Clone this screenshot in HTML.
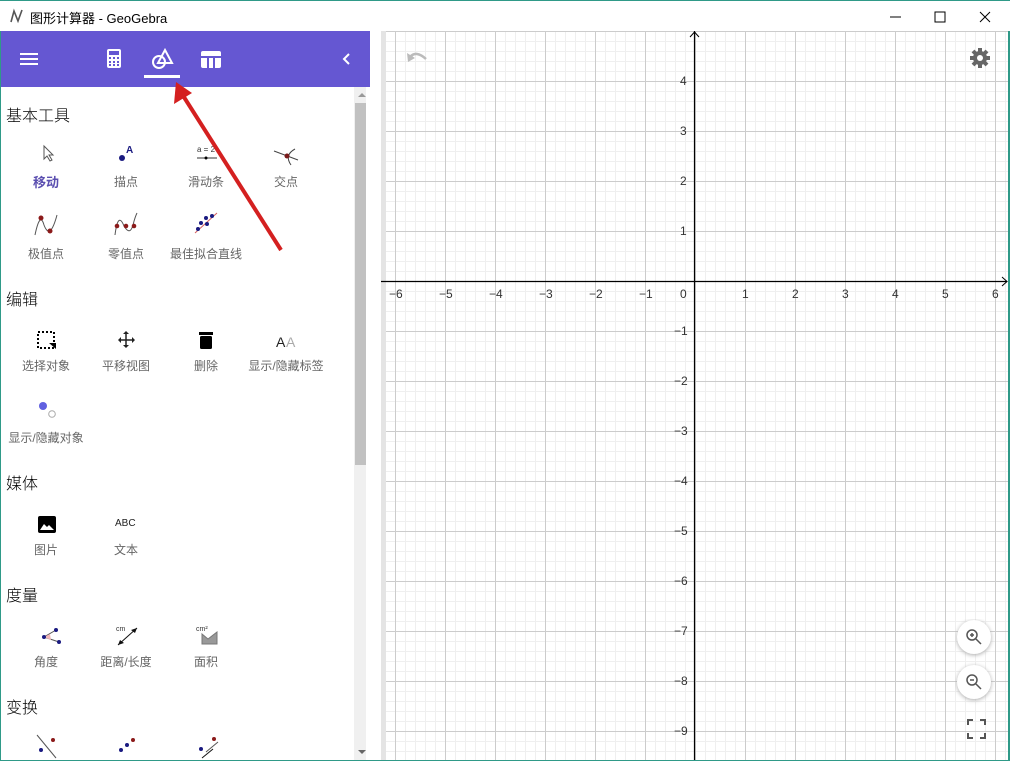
<!DOCTYPE html>
<html><head><meta charset="utf-8"><style>
*{margin:0;padding:0;box-sizing:border-box}
body{width:1010px;height:761px;overflow:hidden;background:#fff;font-family:"Liberation Sans","Noto Sans CJK SC",sans-serif;position:relative}
.title{position:absolute;left:0;top:0;width:1010px;height:31px;background:#fff;border-top:1px solid #2f9a88}
.title span{position:absolute;left:30px;top:7px;font-size:13px;color:#000}
.hdr{position:absolute;left:1px;top:31px;width:369px;height:56px;background:#6557d2}
.panel{position:absolute;left:1px;top:87px;width:354px;height:674px;background:#fff;overflow:hidden}
.sb{position:absolute;left:354px;top:87px;width:16px;height:674px;background:#f0f0f0}
.sec{position:absolute;left:5px;font-size:16px;color:#000;font-weight:normal;font-family:"Noto Sans CJK SC",sans-serif;font-weight:300}
.it{position:absolute;width:80px;text-align:center;font-size:12px;color:#666}
.ic{position:absolute;width:80px;height:26px;left:0}
.gr{position:absolute;left:370px;top:31px;width:638px;height:730px;overflow:hidden}
.lb{position:absolute;font-size:12px;color:#333}
</style></head><body>
<div class="title">
<svg style="position:absolute;left:9px;top:7px" width="16" height="16"><path d="M2 14 L5 3 L9 13 L13 2" fill="none" stroke="#555" stroke-width="1.6"/></svg>
<span>图形计算器 - GeoGebra</span>
<svg style="position:absolute;left:880px;top:8px" width="120" height="16"><path d="M10 8 H21" stroke="#000"/><rect x="55" y="3" width="10" height="10" fill="none" stroke="#000"/><path d="M100 3 L110 13 M110 3 L100 13" stroke="#000"/></svg>
</div>
<div style="position:absolute;left:0;top:31px;width:1px;height:730px;background:#2f9a88"></div>
<div class="hdr">
<svg width="369" height="56">
<path d="M19 23h18M19 28h18M19 33h18" stroke="#fff" stroke-width="2"/>
<rect x="106" y="18" width="14" height="19" rx="2" fill="#fff"/>
<rect x="108" y="20" width="10" height="4" fill="#6557d2"/>
<g fill="#6557d2"><rect x="108" y="26" width="2" height="2"/><rect x="112" y="26" width="2" height="2"/><rect x="116" y="26" width="2" height="2"/><rect x="108" y="30" width="2" height="2"/><rect x="112" y="30" width="2" height="2"/><rect x="116" y="30" width="2" height="2"/><rect x="108" y="33" width="2" height="2"/><rect x="112" y="33" width="2" height="2"/><rect x="116" y="33" width="2" height="2"/></g>
<circle cx="158" cy="31" r="6" fill="none" stroke="#fff" stroke-width="2"/>
<path d="M164 19 L171 32 L157 32 Z" fill="none" stroke="#fff" stroke-width="2"/>
<rect x="143" y="44" width="36" height="3" fill="#fff"/>
<rect x="200" y="20" width="20" height="17" rx="2" fill="#fff"/>
<path d="M200 26h20M207 26v11M213 26v11" stroke="#6557d2" stroke-width="2"/>
<path d="M348 23 L343 28 L348 33" fill="none" stroke="#fff" stroke-width="2"/>
</svg></div>
<div class="panel">
<div class="sec" style="top:15px">基本工具</div>
<div class="it" style="left:5px;top:60px"><svg class="ic" style="top:-4px"><path d="M38 3 L38 16 L41 13 L44 18 L46 17 L43 12 L47 12 Z" fill="#fff" stroke="#555"/></svg><div style="position:absolute;top:25px;width:80px;color:#5b4fb0;font-weight:bold;font-size:13px">移动</div></div>
<div class="it" style="left:85px;top:60px"><svg class="ic" style="top:-4px"><circle cx="36" cy="15" r="3" fill="#1a1a80"/><text x="40" y="10" font-size="10" fill="#1a1a80" font-family="Liberation Sans" font-weight="bold">A</text></svg><div style="position:absolute;top:26px;width:80px">描点</div></div>
<div class="it" style="left:165px;top:60px"><svg class="ic" style="top:-4px"><text x="31" y="9" font-size="8" fill="#333" font-family="Liberation Sans">a = 2</text><path d="M31 15h20" stroke="#333"/><circle cx="40" cy="15" r="1.5"/></svg><div style="position:absolute;top:26px;width:80px">滑动条</div></div>
<div class="it" style="left:245px;top:60px"><svg class="ic" style="top:-4px"><path d="M28 8 L52 17 M49 6 Q38 12 45 22" fill="none" stroke="#444"/><circle cx="41" cy="13" r="2.5" fill="#7a1a1a"/></svg><div style="position:absolute;top:26px;width:80px">交点</div></div>
<div class="it" style="left:5px;top:132px"><svg class="ic" style="top:-8px"><path d="M29 24 Q34 0 38 14 Q44 30 51 4" fill="none" stroke="#555"/><circle cx="35" cy="7" r="2.5" fill="#8b1a1a"/><circle cx="44" cy="20" r="2.5" fill="#8b1a1a"/></svg><div style="position:absolute;top:26px;width:80px">极值点</div></div>
<div class="it" style="left:85px;top:132px"><svg class="ic" style="top:-8px"><path d="M29 24 Q32 0 38 15 Q44 25 47 14 Q49 6 51 2" fill="none" stroke="#555"/><circle cx="31" cy="15" r="2.3" fill="#8b1a1a"/><circle cx="40" cy="15" r="2.3" fill="#8b1a1a"/><circle cx="48" cy="15" r="2.3" fill="#8b1a1a"/></svg><div style="position:absolute;top:26px;width:80px">零值点</div></div>
<div class="it" style="left:165px;top:132px"><svg class="ic" style="top:-8px"><path d="M29 22 L51 2" stroke="#d46060"/><g fill="#1a1a80"><circle cx="32" cy="18" r="2"/><circle cx="35" cy="12" r="2"/><circle cx="41" cy="13" r="2"/><circle cx="40" cy="7" r="2"/><circle cx="46" cy="5" r="2"/></g></svg><div style="position:absolute;top:26px;width:80px">最佳拟合直线</div></div>
<div class="sec" style="top:199px">编辑</div>
<div class="it" style="left:5px;top:244px"><svg class="ic" style="top:-4px"><rect x="32" y="5" width="16" height="16" fill="none" stroke="#000" stroke-width="2" stroke-dasharray="2 2"/><path d="M43 16 L50 16 L50 22 Z" fill="#000"/></svg><div style="position:absolute;top:26px;width:80px">选择对象</div></div>
<div class="it" style="left:85px;top:244px"><svg class="ic" style="top:-4px"><path d="M40 5v15M33 13h15" stroke="#222" stroke-width="1.5"/><path d="M40 4l-3 3h6zM40 21l-3-3h6zM32 13l3-3v6zM49 13l-3-3v6z" fill="#222"/></svg><div style="position:absolute;top:26px;width:80px">平移视图</div></div>
<div class="it" style="left:165px;top:244px"><svg class="ic" style="top:-4px"><rect x="33" y="5" width="14" height="3" fill="#000"/><rect x="34" y="9" width="12" height="13" rx="1.5" fill="#000"/></svg><div style="position:absolute;top:26px;width:80px">删除</div></div>
<div class="it" style="left:245px;top:244px"><svg class="ic" style="top:-4px"><text x="30" y="20" font-size="14" font-family="Liberation Sans" fill="#222">A</text><text x="40" y="20" font-size="14" font-family="Liberation Sans" fill="#aaa">A</text></svg><div style="position:absolute;top:26px;width:80px">显示/隐藏标签</div></div>
<div class="it" style="left:5px;top:316px"><svg class="ic" style="top:-4px"><circle cx="37" cy="7" r="4" fill="#6060e0"/><circle cx="46" cy="15" r="3.3" fill="none" stroke="#aaa"/></svg><div style="position:absolute;top:26px;width:80px">显示/隐藏对象</div></div>
<div class="sec" style="top:383px">媒体</div>
<div class="it" style="left:5px;top:428px"><svg class="ic" style="top:-4px"><rect x="32" y="5" width="18" height="17" rx="2" fill="#000"/><path d="M34 19 L38 13 L41 16 L43 14 L48 19 Z" fill="#fff"/></svg><div style="position:absolute;top:26px;width:80px">图片</div></div>
<div class="it" style="left:85px;top:428px"><svg class="ic" style="top:-4px"><text x="29" y="15" font-size="10" font-family="Liberation Sans" fill="#222">ABC</text></svg><div style="position:absolute;top:26px;width:80px">文本</div></div>
<div class="sec" style="top:495px">度量</div>
<div class="it" style="left:5px;top:540px"><svg class="ic" style="top:-4px"><path d="M38 14 L50 7 M38 14 L53 19" stroke="#555"/><path d="M38 14 L44 11 L45 17 Z" fill="#f3b8b8"/><g fill="#1a1a80"><circle cx="38" cy="14" r="2"/><circle cx="50" cy="7" r="2"/><circle cx="53" cy="19" r="2"/></g></svg><div style="position:absolute;top:26px;width:80px">角度</div></div>
<div class="it" style="left:85px;top:540px"><svg class="ic" style="top:-4px"><text x="30" y="8" font-size="7" fill="#333" font-family="Liberation Sans">cm</text><path d="M32 22 L51 5" stroke="#111"/><path d="M51 5l-6 2 4 3zM32 22l6-2-4-3z" fill="#111"/></svg><div style="position:absolute;top:26px;width:80px">距离/长度</div></div>
<div class="it" style="left:165px;top:540px"><svg class="ic" style="top:-4px"><text x="30" y="8" font-size="7" fill="#333" font-family="Liberation Sans">cm²</text><path d="M36 11 L42 16 L51 9 L51 21 L36 21 Z" fill="#999" stroke="#777"/></svg><div style="position:absolute;top:26px;width:80px">面积</div></div>
<div class="sec" style="top:607px">变换</div>
<svg style="position:absolute;left:5px;top:645px" width="240" height="30"><path d="M31 3 L50 26" stroke="#555"/><circle cx="47" cy="8" r="2" fill="#8b1a1a"/><circle cx="35" cy="18" r="2" fill="#1a1a80"/><circle cx="115" cy="18" r="2" fill="#1a1a80"/><circle cx="121" cy="13" r="2" fill="#1a1a80"/><circle cx="127" cy="8" r="2" fill="#8b1a1a"/><path d="M200 20 L212 10" stroke="#555"/><circle cx="195" cy="17" r="2" fill="#1a1a80"/><circle cx="208" cy="7" r="2" fill="#8b1a1a"/><path d="M196 26 L207 17" stroke="#111"/></svg>
</div>
<div class="sb"><div style="position:absolute;left:1px;top:16px;width:14px;height:362px;background:#c1c1c1"></div>
<svg style="position:absolute;left:4px;top:5px" width="8" height="665"><path d="M0 5 L4 1 L8 5Z" fill="#999"/><path d="M0 658 L4 662 L8 658Z" fill="#666"/></svg></div>
<div style="position:absolute;left:366px;top:87px;width:4px;height:674px;background:#fff"></div>
<div class="gr">
<svg width="638" height="730" style="position:absolute;left:0;top:0">
<defs><pattern id="p" x="25" y="0" width="50" height="50" patternUnits="userSpaceOnUse">
<path d="M10.5 0V50M20.5 0V50M30.5 0V50M40.5 0V50M0 10.5H50M0 20.5H50M0 30.5H50M0 40.5H50" stroke="#efefef" stroke-width="1"/>
<path d="M0.5 0V50M0 0.5H50" stroke="#cccccc" stroke-width="1"/></pattern></defs>
<rect x="11" y="0" width="627" height="730" fill="url(#p)"/>
<rect x="11" y="0" width="5" height="730" fill="#e4e4e4"/>
<path d="M11 250.5H637M324.5 0V730" stroke="#000" stroke-width="1.2"/>
<path d="M632 246 L637 250.5 L632 255M320 6 L324.5 1 L329 6" fill="none" stroke="#000"/>
<path d="M40 26 Q46 19 56 28" fill="none" stroke="#bbb" stroke-width="2.5"/><path d="M37 22 L38 31 L45 27 Z" fill="#bbb"/>
<g transform="translate(610,27)" fill="#666"><circle r="7"/><g stroke="#666" stroke-width="4"><path d="M0 -10V10M-10 0H10M-7 -7L7 7M7 -7L-7 7"/></g><circle r="3" fill="#fff"/></g>
</svg>
<div class="lb" style="left:19px;top:256px">−6</div><div class="lb" style="left:69px;top:256px">−5</div><div class="lb" style="left:119px;top:256px">−4</div><div class="lb" style="left:169px;top:256px">−3</div><div class="lb" style="left:219px;top:256px">−2</div><div class="lb" style="left:269px;top:256px">−1</div><div class="lb" style="left:310px;top:256px">0</div>
<div class="lb" style="left:372px;top:256px">1</div><div class="lb" style="left:422px;top:256px">2</div><div class="lb" style="left:472px;top:256px">3</div><div class="lb" style="left:522px;top:256px">4</div><div class="lb" style="left:572px;top:256px">5</div><div class="lb" style="left:622px;top:256px">6</div>
<div class="lb" style="left:310px;top:43px">4</div><div class="lb" style="left:310px;top:93px">3</div><div class="lb" style="left:310px;top:143px">2</div><div class="lb" style="left:310px;top:193px">1</div>
<div class="lb" style="left:304px;top:293px">−1</div><div class="lb" style="left:304px;top:343px">−2</div><div class="lb" style="left:304px;top:393px">−3</div><div class="lb" style="left:304px;top:443px">−4</div><div class="lb" style="left:304px;top:493px">−5</div><div class="lb" style="left:304px;top:543px">−6</div><div class="lb" style="left:304px;top:593px">−7</div><div class="lb" style="left:304px;top:643px">−8</div><div class="lb" style="left:304px;top:693px">−9</div>
<svg style="position:absolute;left:585px;top:588px" width="40" height="140">
<circle cx="19" cy="18" r="17" fill="#fff" style="filter:drop-shadow(0 1px 2px #aaa)"/>
<circle cx="17" cy="16" r="5" fill="none" stroke="#555" stroke-width="1.5"/><path d="M21 20l5 5M15 16h4M17 14v4" stroke="#555" stroke-width="1.5"/>
<circle cx="19" cy="63" r="17" fill="#fff" style="filter:drop-shadow(0 1px 2px #aaa)"/>
<circle cx="17" cy="61" r="5" fill="none" stroke="#555" stroke-width="1.5"/><path d="M21 65l5 5M15 61h4" stroke="#555" stroke-width="1.5"/>
<path d="M13 106v-5h5M25 101h5v5M30 114v5h-5M18 119h-5v-5" fill="none" stroke="#555" stroke-width="2"/>
</svg>
</div>
<div style="position:absolute;left:1008px;top:31px;width:2px;height:730px;background:#2f9a88"></div>
<div style="position:absolute;left:0;top:760px;width:1010px;height:1px;background:#2f9a88"></div>
<svg style="position:absolute;left:0;top:0" width="1010" height="761">
<path d="M281 250 L182 94" stroke="#d42020" stroke-width="4"/>
<path d="M176 82 L174 104 L192 93 Z" fill="#d42020"/>
</svg>
</body></html>
